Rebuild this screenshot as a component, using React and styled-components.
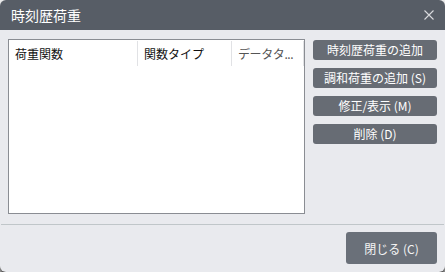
import styled, { createGlobalStyle } from 'styled-components';

const GlobalStyle = createGlobalStyle`
  html, body {
    margin: 0;
    padding: 0;
    background: #f2f2f2;
  }
  body {
    font-family: "Noto Sans CJK JP", "Liberation Sans", sans-serif;
    overflow: hidden;
  }
`;

const Dialog = styled.div`
  width: 445px;
  height: 272px;
  display: flex;
  flex-direction: column;
  border-radius: 6px;
  overflow: hidden;
  background: #e9eaee;
  box-shadow: 0 5px 6px rgba(0, 0, 0, 0.9);
`;

const TitleBar = styled.div`
  height: 30px;
  flex: none;
  display: flex;
  align-items: center;
  justify-content: space-between;
  padding: 0 8px 0 11px;
  background: #575d66;
  color: #ffffff;
  font-size: 14px;
`;

const CloseIcon = styled.button`
  width: 16px;
  height: 16px;
  padding: 0;
  border: none;
  background: none;
  display: flex;
  align-items: center;
  justify-content: center;
  cursor: pointer;
`;

const Body = styled.div`
  flex: 1;
  display: flex;
  gap: 8px;
  padding: 9px 8px 10px 8px;
`;

const ListBox = styled.div`
  width: 297px;
  height: 175px;
  box-sizing: border-box;
  border: 1px solid #8a8d93;
  background: #ffffff;
`;

const HeaderRow = styled.div`
  display: flex;
  height: 27px;
  align-items: center;
`;

const HeaderCell = styled.div`
  width: ${(p) => p.$width}px;
  flex: none;
  box-sizing: border-box;
  height: 25px;
  padding-left: 6px;
  display: flex;
  align-items: center;
  border-right: 1px solid #e1e2e5;
  font-size: 12px;
  letter-spacing: ${(p) => (p.$muted ? '-0.4px' : '0')};
  color: ${(p) => (p.$muted ? '#555' : '#111')};
  white-space: nowrap;
`;

const SideButtons = styled.div`
  display: flex;
  flex-direction: column;
  gap: 8px;
  padding-top: 1px;
`;

const SideButton = styled.button`
  width: 124px;
  height: 20px;
  padding: 0;
  border: none;
  border-radius: 3px;
  background: #676c74;
  color: #ffffff;
  font-family: inherit;
  font-size: 12px;
  line-height: 20px;
  cursor: pointer;
`;

const Footer = styled.div`
  flex: none;
  height: 46px;
  border-top: 1px solid #c0c6c9;
  margin: 0 1px;
  display: flex;
  justify-content: flex-end;
  align-items: flex-start;
  padding: 7px 7px 0 0;
`;

const CloseButton = styled.button`
  width: 91px;
  height: 32px;
  border: none;
  border-radius: 3px;
  background: #6a7079;
  color: #f4f4f4;
  font-family: inherit;
  font-size: 12px;
  cursor: pointer;
`;

const App = () => {
  const columns = [
    { label: '荷重関数', width: 129 },
    { label: '関数タイプ', width: 94 },
    { label: 'データタ...', width: 72, muted: true },
  ];
  const actions = ['時刻歴荷重の追加', '調和荷重の追加 (S)', '修正/表示 (M)', '削除 (D)'];

  return (
    <>
      <GlobalStyle />
      <Dialog>
        <TitleBar>
          <span>時刻歴荷重</span>
          <CloseIcon aria-label="close">
            <svg width="10" height="10" viewBox="0 0 10 10">
              <path d="M0.5 0.5 L9.5 9.5 M9.5 0.5 L0.5 9.5" stroke="#d8dadd" strokeWidth="1.1" />
            </svg>
          </CloseIcon>
        </TitleBar>
        <Body>
          <ListBox>
            <HeaderRow>
              {columns.map((c) => (
                <HeaderCell key={c.label} $width={c.width} $muted={c.muted}>
                  {c.label}
                </HeaderCell>
              ))}
            </HeaderRow>
          </ListBox>
          <SideButtons>
            {actions.map((a) => (
              <SideButton key={a}>{a}</SideButton>
            ))}
          </SideButtons>
        </Body>
        <Footer>
          <CloseButton>閉じる (C)</CloseButton>
        </Footer>
      </Dialog>
    </>
  );
};

export default App;
